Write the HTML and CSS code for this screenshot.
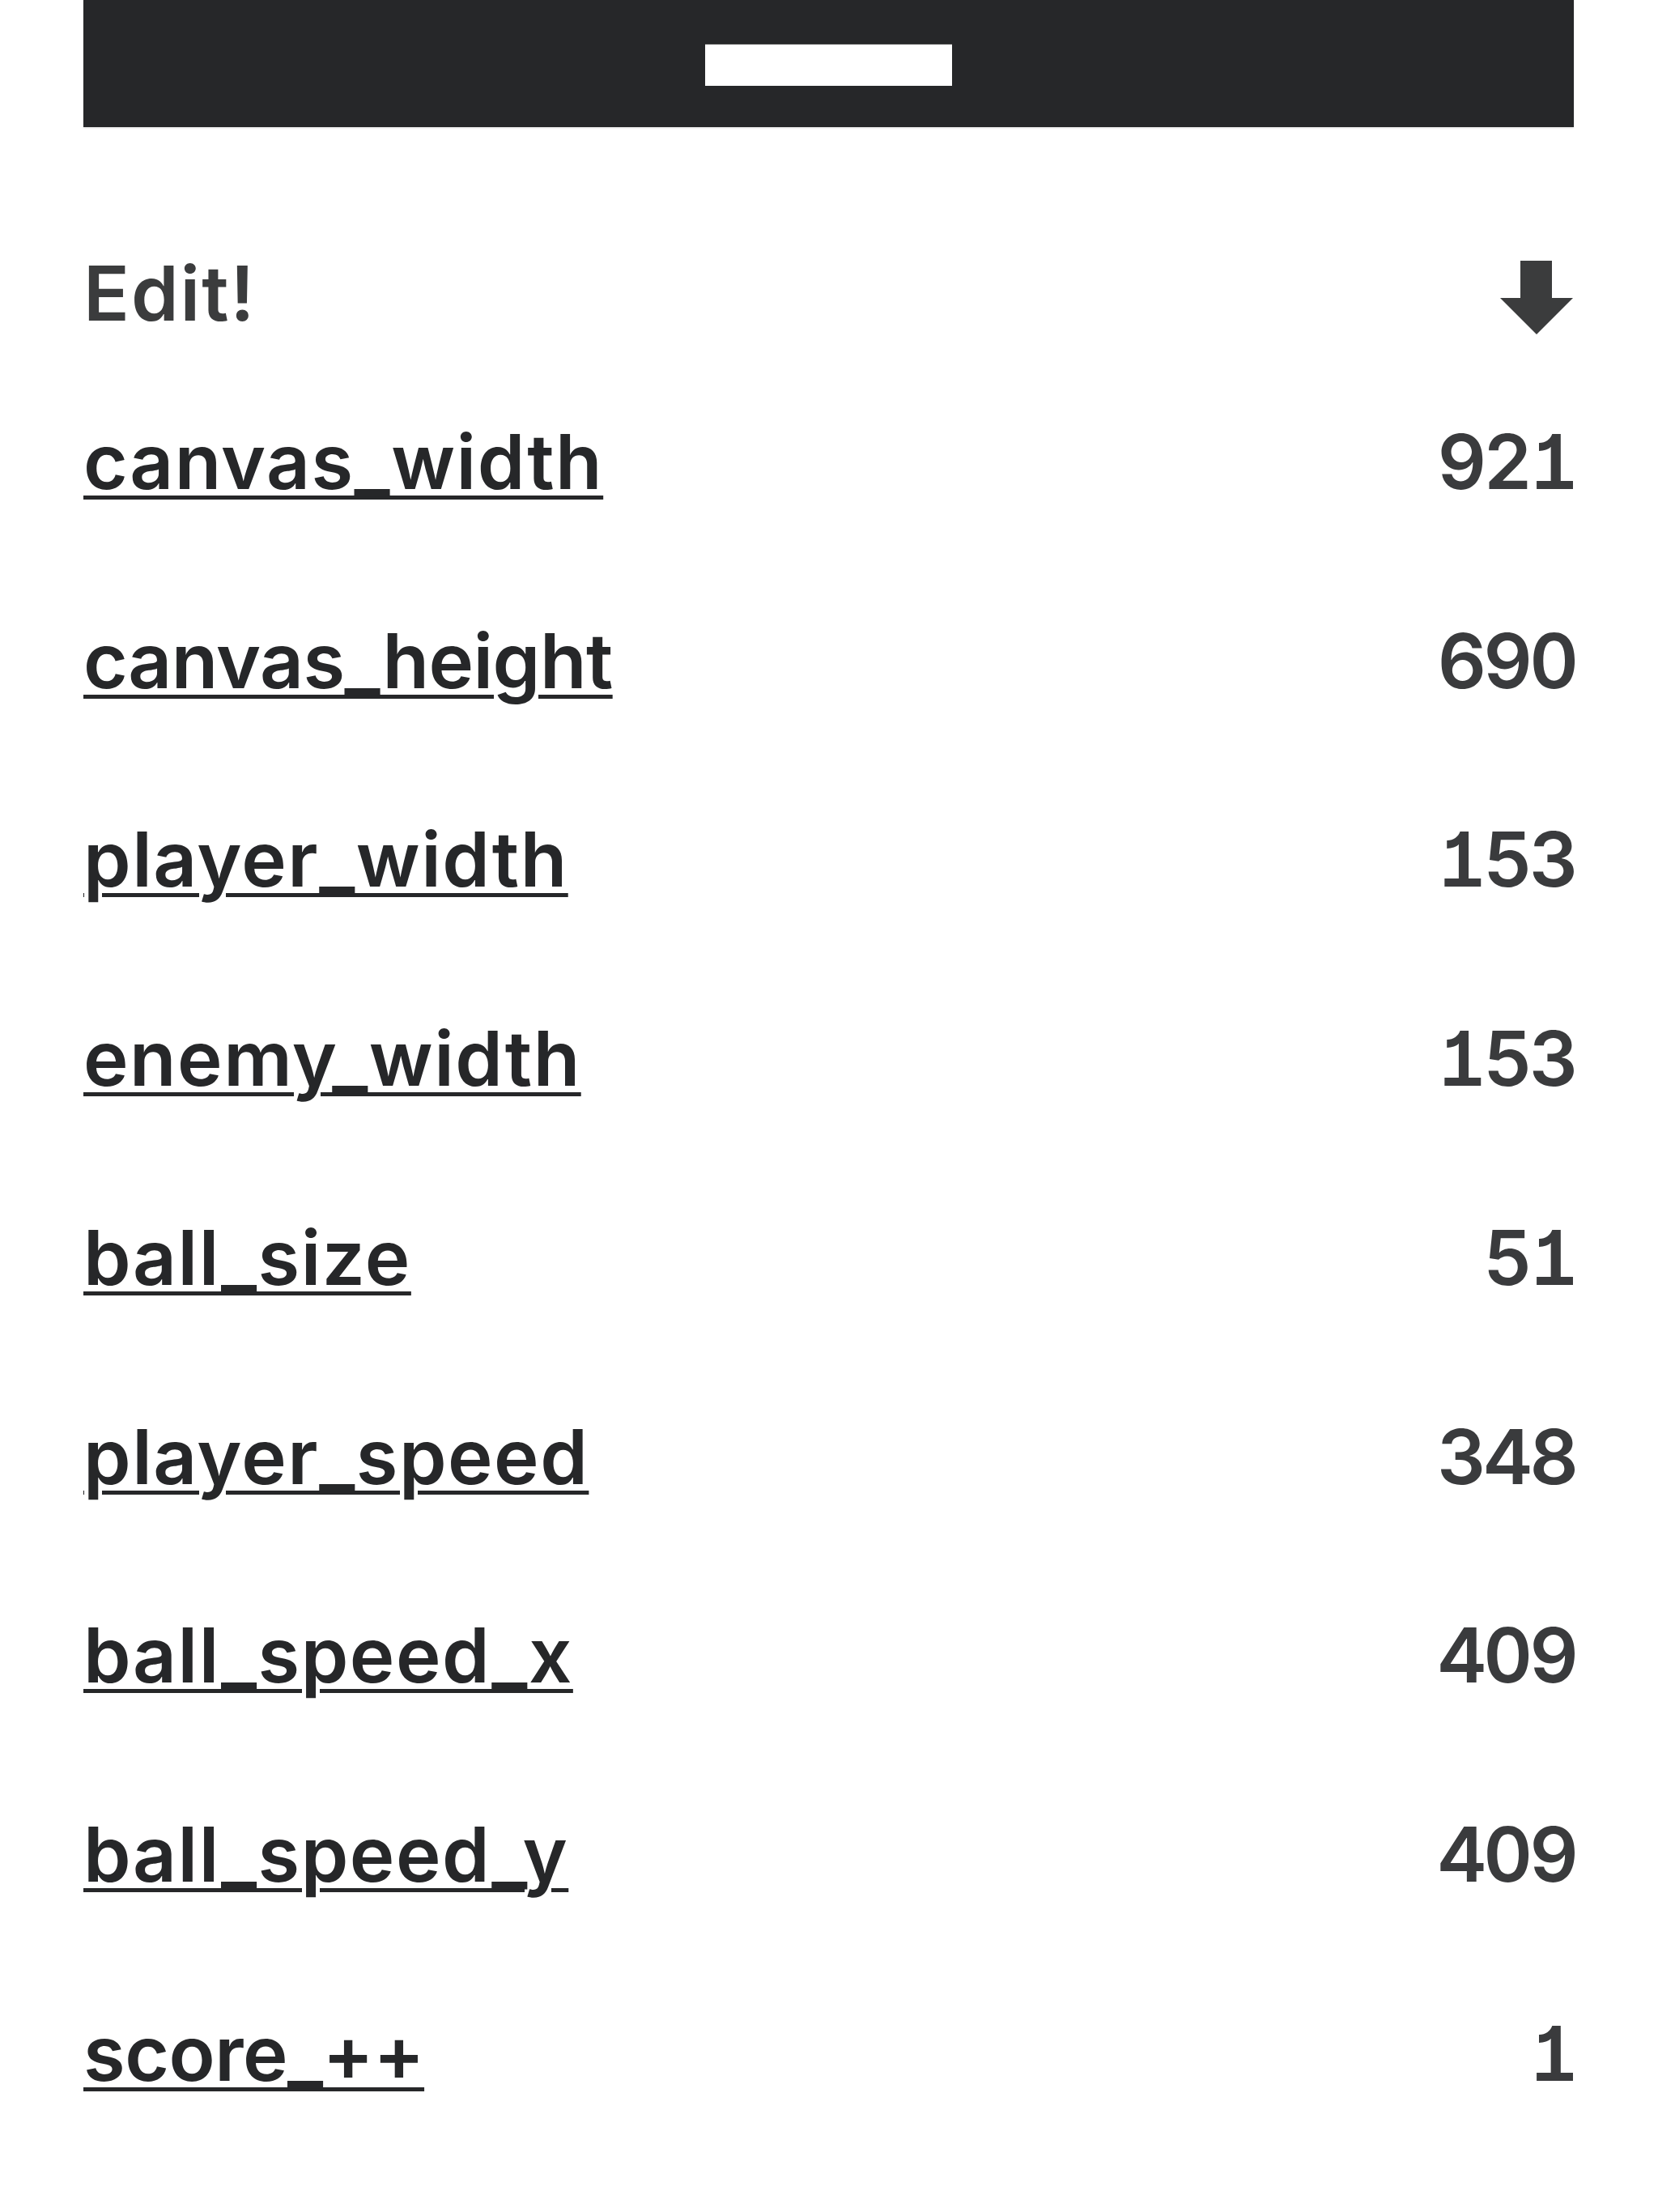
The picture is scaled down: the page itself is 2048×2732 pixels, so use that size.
FILE: index.html
```html
<!DOCTYPE html>
<html lang="en">
<head>
  <meta charset="UTF-8">
  <title>Edit!</title>
  <link rel="stylesheet" href="styles.css">
</head>
<body>
  <div class="container">
    <div class="topbar">
      <div class="topbar-block"></div>
    </div>

    <div class="edit-head">
      <span class="edit-title">Edit!</span>
      <svg class="arrow" viewBox="0 0 90 91" width="90" height="91">
        <path d="M25 0H64V46H90L45 91L0 46H25Z" fill="#3b3c3d"/>
      </svg>
    </div>

    <ul class="settings">
      <li><a href="#">canvas_width</a><span class="val">921</span></li>
      <li><a href="#" class="tight">canvas_height</a><span class="val">690</span></li>
      <li><a href="#">player_width</a><span class="val">153</span></li>
      <li><a href="#">enemy_width</a><span class="val">153</span></li>
      <li><a href="#">ball_size</a><span class="val">51</span></li>
      <li><a href="#">player_speed</a><span class="val">348</span></li>
      <li><a href="#">ball_speed_x</a><span class="val">409</span></li>
      <li><a href="#">ball_speed_y</a><span class="val">409</span></li>
      <li><a href="#" class="tight">score_++</a><span class="val">1</span></li>
    </ul>
  </div>
</body>
</html>
```

FILE: styles.css
```css
body {
  margin: 0;
  background: #fff;
  font-family: Inter, "Noto Sans", sans-serif;
  color: #262729;
}

.container {
  padding: 0 104px 0 103px;
}

/* dark header strip with the white block in the middle */
.topbar {
  height: 157px;
  background: #262729;
  display: flex;
  align-items: center;
  justify-content: center;
  box-shadow: 0 1px 2px rgba(0, 0, 0, 0.15);
}

.topbar-block {
  width: 305px;
  height: 51px;
  background: #fff;
  border-top: 1px solid #4a4a4a;
  margin-top: 3px;
}

.edit-head {
  display: flex;
  justify-content: space-between;
  align-items: center;
  height: 170px;
  margin-top: 120px;
}

.edit-title {
  font-size: 94px;
  font-weight: 600;
  color: #3b3c3d;
  letter-spacing: 2px;
}

.arrow {
  display: block;
  margin-right: 1px;
  margin-top: 10px;
}

.settings {
  list-style: none;
  margin: 0;
  padding: 0;
}

.settings li {
  display: flex;
  justify-content: space-between;
  align-items: center;
  height: 245.75px;
  font-size: 94px;
  font-weight: 600;
}

.settings a {
  color: #262729;
  text-decoration: underline;
  text-decoration-thickness: 5px;
  text-underline-offset: 8px;
  letter-spacing: 1.5px;
}

.settings a.tight {
  letter-spacing: -0.5px;
}

.val {
  color: #3a3b3d;
  font-feature-settings: "cv01", "tnum";
  letter-spacing: -4px;
  margin-right: -2px;
}
```
